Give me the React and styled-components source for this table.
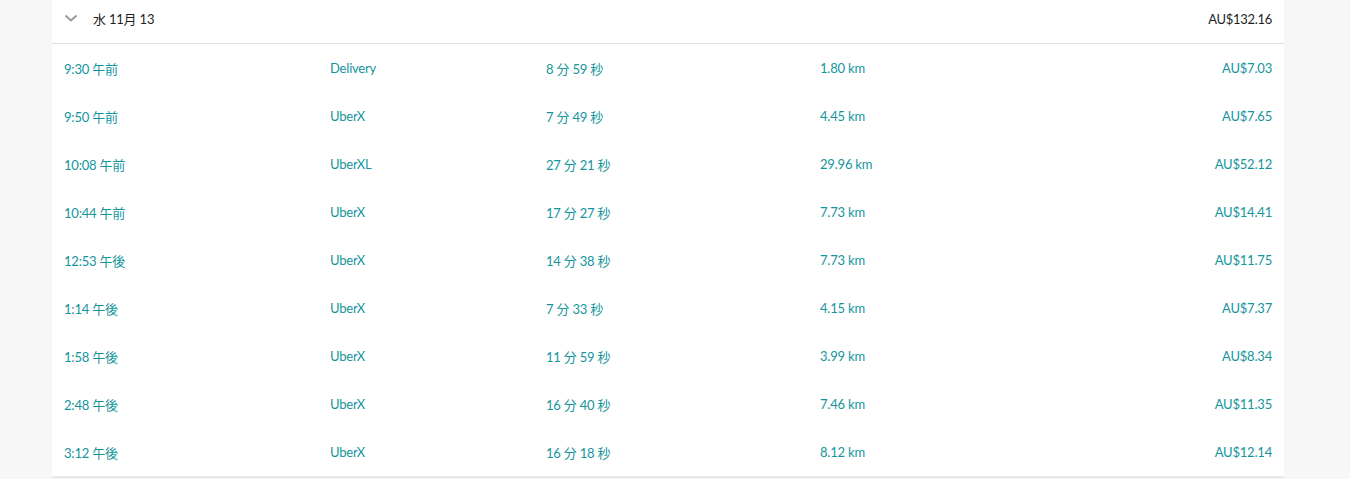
import React from "react"
import styled, { createGlobalStyle } from "styled-components"

const GlobalStyle = createGlobalStyle`
  html, body {
    margin: 0;
    padding: 0;
    background: #f7f7f7;
  }
  body {
    font-family: Lato, "Noto Sans CJK JP", sans-serif;
  }
`

const Page = styled.div`
  width: 1232px;
  margin-left: 52px;
`

const Card = styled.section`
  background: #fff;
  border-bottom: 2px solid #e6e6e6;
`

const Header = styled.div`
  display: flex;
  align-items: center;
  height: 50px;
  margin-top: -6px;
  padding: 0 12px;
  border-bottom: 1px solid #e2e2e2;
  font-size: 13px;
  color: #1f1f1f;
  box-sizing: border-box;
`

const Chevron = styled.span`
  display: flex;
  width: 16px;
  margin: 0 13px 0 0;
  color: #9a9a9a;
`

const DateLabel = styled.span`
  flex: 1;
  letter-spacing: -0.2px;
`

const Total = styled.span`
  letter-spacing: -0.3px;
`

const Row = styled.div`
  display: flex;
  align-items: center;
  height: 48px;
  padding: 0 12px;
  font-size: 13px;
  color: #14959c;
  letter-spacing: -0.2px;
`

const Cell = styled.span`
  flex: ${p => (p.$w ? `0 0 ${p.$w}px` : "1")};
  text-align: ${p => (p.$w ? "left" : "right")};
  white-space: nowrap;
`

const widths = [266, 216, 274, 252]

const trips = [
  ["9:30 午前", "Delivery", "8 分 59 秒", "1.80 km", "AU$7.03"],
  ["9:50 午前", "UberX", "7 分 49 秒", "4.45 km", "AU$7.65"],
  ["10:08 午前", "UberXL", "27 分 21 秒", "29.96 km", "AU$52.12"],
  ["10:44 午前", "UberX", "17 分 27 秒", "7.73 km", "AU$14.41"],
  ["12:53 午後", "UberX", "14 分 38 秒", "7.73 km", "AU$11.75"],
  ["1:14 午後", "UberX", "7 分 33 秒", "4.15 km", "AU$7.37"],
  ["1:58 午後", "UberX", "11 分 59 秒", "3.99 km", "AU$8.34"],
  ["2:48 午後", "UberX", "16 分 40 秒", "7.46 km", "AU$11.35"],
  ["3:12 午後", "UberX", "16 分 18 秒", "8.12 km", "AU$12.14"],
]

export default function App() {
  return (
    <Page>
      <GlobalStyle />
      <Card>
        <Header>
          <Chevron>
            <svg width="14" height="9" viewBox="0 0 14 9" fill="none">
              <path d="M1.5 1.5 L7 6.5 L12.5 1.5" stroke="currentColor" strokeWidth="2" />
            </svg>
          </Chevron>
          <DateLabel>水 11月 13</DateLabel>
          <Total>AU$132.16</Total>
        </Header>
        {trips.map(t => (
          <Row key={t[0]}>
            {t.map((v, i) => (
              <Cell key={i} $w={widths[i]}>
                {v}
              </Cell>
            ))}
          </Row>
        ))}
      </Card>
    </Page>
  )
}
